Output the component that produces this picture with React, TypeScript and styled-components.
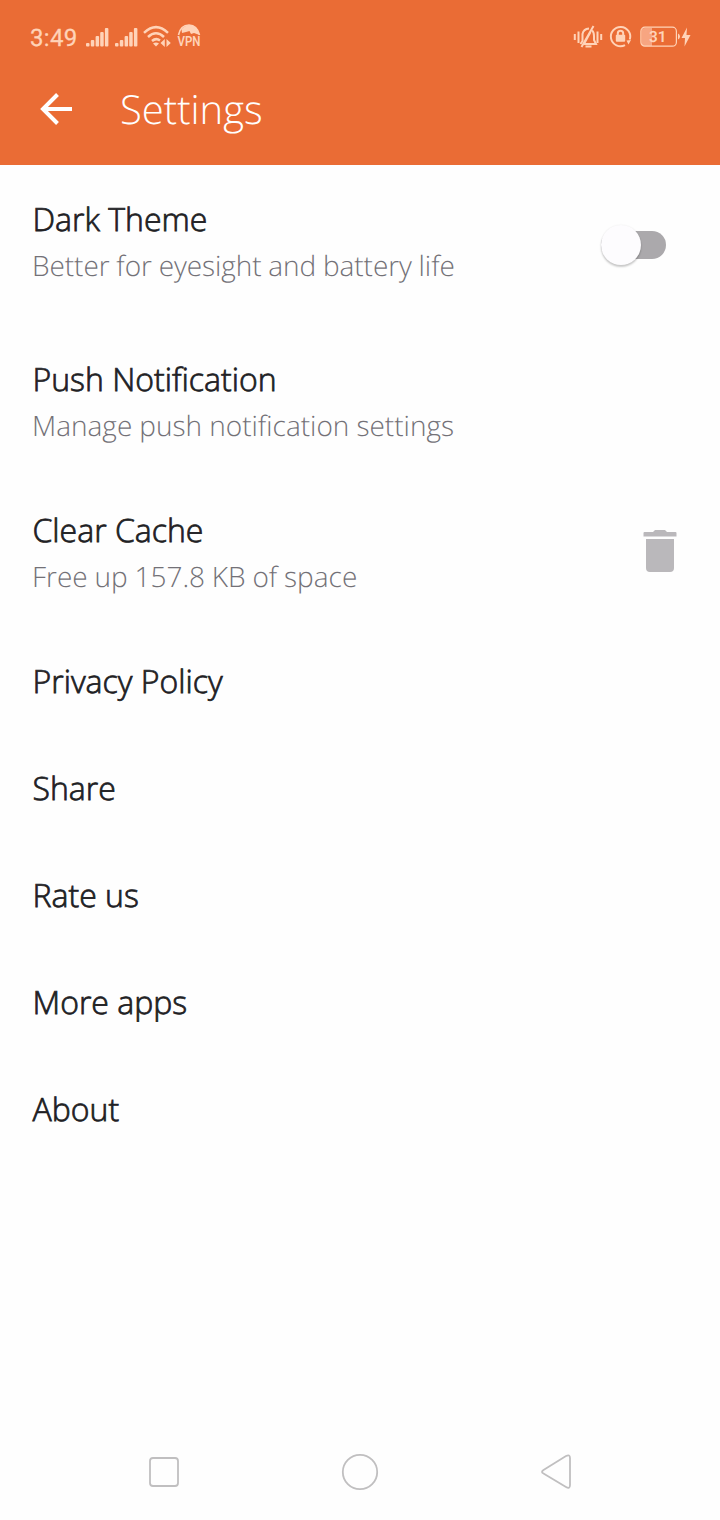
import React from "react";
import styled, { createGlobalStyle } from "styled-components";

const GlobalStyle = createGlobalStyle`
  body { margin: 0; background: #fefefe; }
  *, *::before, *::after { box-sizing: border-box; }
`;

const Screen = styled.div`
  display: flex;
  flex-direction: column;
  width: 720px;
  height: 1520px;
  background: #fefefe;
  font-family: "Open Sans", sans-serif;
  text-rendering: geometricPrecision;
  overflow: hidden;
`;

const Header = styled.header`
  height: 165px;
  background: #ea6c35;
  color: #fff;
`;

const StatusBar = styled.div`
  display: flex;
  align-items: center;
  justify-content: space-between;
  height: 56px;
  padding: 17px 28px 0 30px;
  color: #ffd3b8;
`;

const StatusGroup = styled.div`
  display: flex;
  align-items: center;
  height: 39px;
`;

const Clock = styled.span`
  width: 56px;
  font: 400 24px/40px Roboto, sans-serif;
  letter-spacing: 0.3px;
  -webkit-text-stroke: 0.3px currentColor;
  padding-top: 2px;
`;

const StatusIcon = styled.svg<{ $gap?: number }>`
  display: block;
  flex: none;
  margin-left: ${(p) => p.$gap ?? 0}px;
  overflow: visible;
`;

const AppBar = styled.div`
  display: flex;
  align-items: center;
  height: 106px;
  padding: 0 40px;
`;

const BackButton = styled.button`
  display: flex;
  width: 80px;
  padding: 0;
  border: 0;
  background: none;
`;

const Title = styled.h1`
  margin: 0;
  font-size: 40px;
  line-height: 54px;
  font-weight: 300;
`;

const List = styled.main`
  flex: 1;
`;

const Row = styled.section<{ $bottom?: number; $right?: number }>`
  display: flex;
  align-items: center;
  justify-content: space-between;
  padding: 33px ${(p) => p.$right ?? 32}px ${(p) => p.$bottom ?? 31}px 32px;
`;

const Label = styled.div`
  padding-left: 0.5px;
  font-size: 32px;
  line-height: 43px;
  font-weight: 300;
  -webkit-text-stroke: 0.75px currentColor;
  color: #202023;
`;

const Description = styled.div<{ $tracking?: number; $wordGap?: number }>`
  margin-top: 6px;
  font-size: 28px;
  line-height: 38px;
  font-weight: 300;
  letter-spacing: ${(p) => p.$tracking ?? 0}px;
  word-spacing: ${(p) => p.$wordGap ?? 0}px;
  font-feature-settings: "liga" 1;
  color: #737177;
`;

const Switch = styled.div`
  display: flex;
  align-items: center;
  width: 65px;
  height: 28px;
  margin-top: 7px;
  background: #aba9ac;
  border-radius: 14px;
`;

const Thumb = styled.span`
  flex: none;
  width: 40px;
  height: 40px;
  border-radius: 50%;
  background: #fdfcfe;
  box-shadow: 0 2px 2px rgba(0, 0, 0, 0.2), 0 0 2px rgba(0, 0, 0, 0.08);
`;

const TrashIcon = styled.svg`
  display: block;
  margin-bottom: 4px;
`;

const Navigation = styled.nav`
  display: flex;
  align-items: center;
  justify-content: space-between;
  height: 96px;
  padding: 0 147px;
`;

const Signal = ({ gap }: { gap: number }) => (
  <StatusIcon $gap={gap} width="23" height="20" viewBox="0 0 23 20" fill="currentColor">
    <rect x="0" y="16" width="3.500" height="3.500" rx="1" />
    <rect x="4.800" y="13" width="3.500" height="6.500" rx="1" />
    <rect x="9.600" y="9" width="3.500" height="10.500" rx="1" />
    <rect x="14.200" y="5" width="3.500" height="14.500" rx="1" />
    <rect x="18.900" y="1" width="3.500" height="18.500" rx="1" />
  </StatusIcon>
);

const Wifi = () => (
  <StatusIcon $gap={5} width="29" height="23" viewBox="0 0 29 23" fill="none" stroke="currentColor" strokeWidth="2.500">
    <path d="M1 7.800Q13 -3.500 25 7.800M5 12Q13 4.500 21 12M9 16Q13 12.500 17 15.500" />
    <path d="M10 18.500Q13 16.500 16 18.500L13 21.500Z" fill="currentColor" stroke="none" />
    <path d="M21.800 14V22L17.500 18ZM23.500 14V22L27.800 18Z" fill="currentColor" stroke="none" />
  </StatusIcon>
);

const Vpn = () => (
  <StatusIcon $gap={5} width="25" height="24" viewBox="0 0 25 24" fill="none" stroke="currentColor">
    <path d="M1.500 10Q3.500 0 12 0Q20 0 22.500 10" strokeWidth="1.600" />
    <path d="M4.500 4Q10 -1.500 16 0.500L20 4L22.500 10L17 8L14 9L12.500 6L9 7L5 8Z" fill="currentColor" stroke="none" />
    <text x="0.500" y="21" textLength="23" lengthAdjust="spacingAndGlyphs" fill="currentColor" stroke="none" fontFamily="Roboto, sans-serif" fontWeight="600" fontSize="14">VPN</text>
  </StatusIcon>
);

const SilentBell = () => (
  <StatusIcon width="30" height="24" viewBox="0 0 30 24" fill="none" stroke="currentColor" strokeWidth="2">
    <path d="M1.800 9V15M5.500 6.500V18M24.500 6.500V18M28.200 9V15" />
    <path d="M7.500 19L9.500 16V9Q10.500 4 16 3.500M19 5.500Q21 7 21 11V15L23 19H11M12.500 21.500H18.500" />
    <path d="M20.500 1L8.500 22M17.500 7L11.500 18" />
  </StatusIcon>
);

const RotationLock = () => (
  <StatusIcon $gap={6} width="23" height="23" viewBox="0 0 23 23" fill="none" stroke="currentColor" strokeWidth="2">
    <path d="M16 20.200A9.700 9.700 0 1 1 20.800 14.500" />
    <path d="M17.500 15.500L22 15L19.500 19.500Z" fill="currentColor" stroke="none" />
    <rect x="6.800" y="9.800" width="9.400" height="7" rx="1" fill="currentColor" stroke="none" />
    <path d="M8.800 10V8.500A2.700 2.700 0 0 1 14.200 8.500V10" />
  </StatusIcon>
);

const Battery = () => (
  <StatusIcon $gap={8} width="52" height="22" viewBox="0 0 52 22">
    <path d="M5 2H12V20H5Q1.500 20 1.500 17V5Q1.500 2 5 2Z" fill="#f7a581" />
    <rect x="0.900" y="1.200" width="35.500" height="19" rx="4" fill="none" stroke="currentColor" strokeWidth="1.200" />
    <path d="M38 7.500Q40 8.500 40 10.500Q40 12.500 38 13.500Z" fill="currentColor" />
    <text x="9" y="16" textLength="17.500" lengthAdjust="spacingAndGlyphs" fill="currentColor" fontFamily="Roboto, sans-serif" fontWeight="600" fontSize="15.500">31</text>
    <path d="M47 1.500L41.500 12H45L44.500 20.500L50.500 9H46.500Z" fill="currentColor" />
  </StatusIcon>
);

const simpleItems = ["Privacy Policy", "Share", "Rate us", "More apps", "About"];

export default function App() {
  return (
    <>
      <GlobalStyle />
      <Screen>
        <Header>
          <StatusBar>
            <StatusGroup>
              <Clock>3:49</Clock>
              <Signal gap={0} />
              <Signal gap={6} />
              <Wifi />
              <Vpn />
            </StatusGroup>
            <StatusGroup>
              <SilentBell />
              <RotationLock />
              <Battery />
            </StatusGroup>
          </StatusBar>
          <AppBar>
            <BackButton aria-label="Back">
              <svg width="34" height="34" viewBox="0 0 34 34" fill="none" stroke="#fff" strokeWidth="4">
                <path d="M32 17H3M17.500 2.500L3 17L17.500 31.500" />
              </svg>
            </BackButton>
            <Title>Settings</Title>
          </AppBar>
        </Header>
        <List>
          <Row $bottom={40} $right={54}>
            <div>
              <Label>Dark Theme</Label>
              <Description $tracking={-0.07} $wordGap={-0.4}>Better for eyesight and battery life</Description>
            </div>
            <Switch role="switch" aria-checked={false} aria-label="Dark Theme">
              <Thumb />
            </Switch>
          </Row>
          <Row>
            <div>
              <Label>Push Notification</Label>
              <Description $wordGap={-0.2}>Manage push notification settings</Description>
            </div>
          </Row>
          <Row $right={43}>
            <div>
              <Label>Clear Cache</Label>
              <Description $wordGap={-0.5}>Free up 157.8 KB of space</Description>
            </div>
            <TrashIcon width="34" height="42" viewBox="0 0 34 42" fill="#bab8bb">
              <path d="M1.500 2H10L12 0H22L24 2H32.500Q33.500 2 33.500 3V6.500H0.500V3Q0.500 2 1.500 2ZM3 9H31V38Q31 42 27 42H7Q3 42 3 38Z" />
            </TrashIcon>
          </Row>
          {simpleItems.map((label) => (
            <Row key={label}>
              <Label>{label}</Label>
            </Row>
          ))}
        </List>
        <Navigation>
          <svg width="34" height="38" viewBox="0 0 34 38" fill="none" stroke="#c0bfc0" strokeWidth="1.800">
            <rect x="3" y="5" width="28" height="28" rx="3" />
          </svg>
          <svg width="38" height="38" viewBox="0 0 38 38" fill="none" stroke="#c0bfc0" strokeWidth="1.800">
            <circle cx="19" cy="19" r="17.200" />
          </svg>
          <svg width="34" height="38" viewBox="0 0 34 38" fill="none" stroke="#c0bfc0" strokeWidth="1.800">
            <path d="M4.500 17L27 3Q31 1 31 5V32Q31 36.500 27 34L4.500 20.500Q1.500 19 4.500 17Z" />
          </svg>
        </Navigation>
      </Screen>
    </>
  );
}
